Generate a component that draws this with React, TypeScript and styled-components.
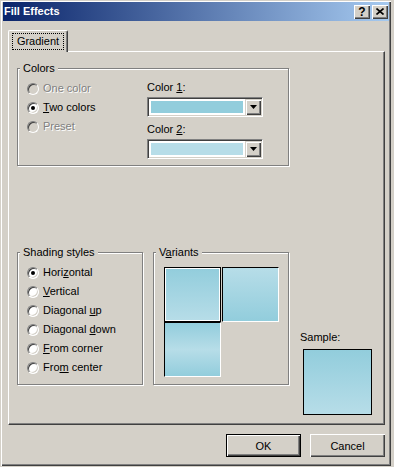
import { FC, ReactNode } from "react";
import styled, { createGlobalStyle } from "styled-components";

const GlobalStyle = createGlobalStyle`
    html, body {
        margin: 0;
        padding: 0;
    }
    body {
        width: 394px;
        height: 467px;
        overflow: hidden;
        background: #d4d0c8;
        font-family: "Liberation Sans", Arial, sans-serif;
        font-size: 11px;
        color: #000;
    }
`;

const Window = styled.div`
    width: 391px;
    height: 466px;
    box-sizing: border-box;
    padding: 2px 2px 2px 3px;
    background: #d4d0c8;
    box-shadow: inset 1px 1px #d4d0c8, inset 2px 2px #fff, inset -1px -1px #404040,
        inset -2px -2px #808080;
    display: flex;
    flex-direction: column;
`;

const TitleBar = styled.div`
    flex: none;
    height: 19px;
    display: flex;
    align-items: center;
    padding: 0 1px 0 1px;
    background: linear-gradient(to right, #0a246a, #a6caf0);
`;

const TitleText = styled.span`
    flex: 1;
    color: #fff;
    font-weight: bold;
    line-height: 13px;
`;

const CaptionButton = styled.button`
    width: 16px;
    height: 14px;
    margin-left: 2px;
    padding: 0;
    border: none;
    background: #d4d0c8;
    box-shadow: inset 1px 1px #fff, inset -1px -1px #404040, inset -2px -2px #808080;
    display: flex;
    align-items: center;
    justify-content: center;
    font: bold 12px "Liberation Sans", Arial, sans-serif;
    line-height: 12px;
    color: #000;
`;

const Body = styled.div`
    flex: 1;
    display: flex;
    flex-direction: column;
    padding: 9px 0 0 5px;
`;

const TabStrip = styled.div`
    display: flex;
    position: relative;
    z-index: 1;
    margin-bottom: -1px;
`;

const Tab = styled.div`
    width: 60px;
    height: 22px;
    box-sizing: border-box;
    border-top: 1px solid #fff;
    border-left: 1px solid #fff;
    border-right: 1px solid #404040;
    border-top-left-radius: 2px;
    border-top-right-radius: 2px;
    box-shadow: inset -1px 0 #808080;
    background: #d4d0c8;
    display: flex;
    justify-content: center;
    padding-top: 2px;
`;

const FocusLabel = styled.span`
    height: 17px;
    box-sizing: border-box;
    padding: 1px 4px;
    border: 1px dotted #000;
    line-height: 13px;
`;

const Panel = styled.div`
    width: 377px;
    height: 374px;
    box-sizing: border-box;
    border-top: 1px solid #fff;
    border-left: 1px solid #fff;
    border-right: 1px solid #404040;
    border-bottom: 1px solid #404040;
    box-shadow: inset -1px -1px #808080;
    padding: 16px 0 0 8px;
    display: flex;
    flex-direction: column;
`;

const Group = styled.div<{ $w: number; $h: number }>`
    position: relative;
    width: ${(p) => p.$w}px;
    height: ${(p) => p.$h}px;
    box-sizing: border-box;
    border: 1px solid #808080;
    box-shadow: inset 1px 1px #fff, 1px 1px #fff;
    display: flex;
`;

const Caption = styled.span`
    position: absolute;
    top: -7px;
    left: 2px;
    padding: 0 3px;
    background: #d4d0c8;
    line-height: 13px;
`;

const RadioList = styled.div<{ $w?: number }>`
    width: ${(p) => (p.$w ? `${p.$w}px` : "auto")};
    box-sizing: border-box;
    padding: 10px 0 0 9px;
    display: flex;
    flex-direction: column;
`;

const RadioRow = styled.div<{ $disabled?: boolean }>`
    height: 19px;
    display: flex;
    align-items: center;
    line-height: 13px;
    color: ${(p) => (p.$disabled ? "#808080" : "#000")};
    text-shadow: ${(p) => (p.$disabled ? "1px 1px #fff" : "none")};
`;

const RadioCircle = styled.span<{ $checked?: boolean; $disabled?: boolean }>`
    flex: none;
    width: 12px;
    height: 12px;
    box-sizing: border-box;
    margin-right: 4px;
    border-radius: 50%;
    border: 1px solid;
    border-color: #808080 #fff #fff #808080;
    background: ${(p) => (p.$disabled ? "#d4d0c8" : "#fff")};
    box-shadow: inset 1px 1px #404040, inset -1px -1px #d4d0c8;
    display: flex;
    align-items: center;
    justify-content: center;

    &::after {
        content: "";
        display: ${(p) => (p.$checked ? "block" : "none")};
        width: 4px;
        height: 4px;
        border-radius: 50%;
        background: #000;
    }
`;

const ColorColumn = styled.div`
    display: flex;
    flex-direction: column;
    padding-top: 12px;
`;

const FieldLabel = styled.span<{ $gap?: number }>`
    line-height: 13px;
    margin-top: ${(p) => p.$gap ?? 0}px;
`;

const ComboBox = styled.div`
    width: 116px;
    height: 20px;
    margin-top: 3px;
    box-sizing: border-box;
    border: 1px solid;
    border-color: #808080 #fff #fff #808080;
    box-shadow: inset 1px 1px #404040, inset -1px -1px #d4d0c8;
    padding: 1px;
    display: flex;
`;

const ComboField = styled.div`
    flex: 1;
    background: #fff;
    padding: 2px;
    display: flex;
`;

const Swatch = styled.div<{ $color: string }>`
    flex: 1;
    background: ${(p) => p.$color};
`;

const ArrowButton = styled.div`
    width: 16px;
    height: 16px;
    background: #d4d0c8;
    box-shadow: inset 1px 1px #d4d0c8, inset 2px 2px #fff, inset -1px -1px #404040,
        inset -2px -2px #808080;
    display: flex;
    align-items: center;
    justify-content: center;
`;

const LowerRow = styled.div`
    display: flex;
    align-items: flex-start;
    margin-top: 86px;
`;

const VariantsGroup = styled(Group)`
    margin-left: 10px;
`;

const TileGrid = styled.div`
    display: grid;
    grid-template-columns: 57px 57px;
    grid-template-rows: 55px 55px;
    column-gap: 1px;
    padding: 14px 0 0 10px;
`;

const Tile = styled.div<{ $fill: string; $selected?: boolean }>`
    box-sizing: border-box;
    background: ${(p) => p.$fill};
    border: 1px solid;
    border-color: ${(p) => (p.$selected ? "#000" : "#000 #fff #fff #000")};
    box-shadow: ${(p) => (p.$selected ? "inset -1px -1px #fff, inset 1px 1px #fff" : "none")};
`;

const SampleColumn = styled.div`
    display: flex;
    flex-direction: column;
    margin-left: 11px;
    padding-top: 79px;
`;

const SampleBox = styled.div`
    width: 69px;
    height: 66px;
    margin: 5px 0 0 3px;
    box-sizing: border-box;
    border: 1px solid #000;
    background: linear-gradient(to bottom, #92cddc, #b7dde8);
`;

const Footer = styled.div`
    width: 377px;
    display: flex;
    justify-content: flex-end;
    gap: 9px;
    margin-top: 9px;
`;

const PushButton = styled.button<{ $default?: boolean }>`
    width: 75px;
    height: 23px;
    box-sizing: border-box;
    padding: 0;
    background: #d4d0c8;
    border: ${(p) => (p.$default ? "1px solid #000" : "none")};
    box-shadow: inset 1px 1px #fff, inset -1px -1px #404040, inset -2px -2px #808080;
    font: 11px "Liberation Sans", Arial, sans-serif;
    color: #000;
`;

const DARK = "#92cddc";
const LIGHT = "#b7dde8";

const Radio: FC<{ checked?: boolean; disabled?: boolean; children: ReactNode }> = ({
    checked,
    disabled,
    children,
}) => (
    <RadioRow $disabled={disabled}>
        <RadioCircle $checked={checked} $disabled={disabled} />
        <span>{children}</span>
    </RadioRow>
);

const ColorPicker: FC<{ color: string }> = ({ color }) => (
    <ComboBox>
        <ComboField>
            <Swatch $color={color} />
        </ComboField>
        <ArrowButton>
            <svg width="7" height="4" viewBox="0 0 7 4">
                <polygon points="0,0 7,0 3.5,4" fill="#000" />
            </svg>
        </ArrowButton>
    </ComboBox>
);

const App: FC = () => {
    return (
        <>
            <GlobalStyle />
            <Window>
                <TitleBar>
                    <TitleText>Fill Effects</TitleText>
                    <CaptionButton>?</CaptionButton>
                    <CaptionButton>
                        <svg width="8" height="7" viewBox="0 0 8 7">
                            <path d="M0.5 0.5 L7.5 6.5 M7.5 0.5 L0.5 6.5" stroke="#000" strokeWidth="1.6" />
                        </svg>
                    </CaptionButton>
                </TitleBar>
                <Body>
                    <TabStrip>
                        <Tab>
                            <FocusLabel>Gradient</FocusLabel>
                        </Tab>
                    </TabStrip>
                    <Panel>
                        <Group $w={272} $h={98}>
                            <Caption>Colors</Caption>
                            <RadioList $w={129}>
                                <Radio disabled>One color</Radio>
                                <Radio checked>
                                    <u>T</u>wo colors
                                </Radio>
                                <Radio disabled>Preset</Radio>
                            </RadioList>
                            <ColorColumn>
                                <FieldLabel>
                                    Color <u>1</u>:
                                </FieldLabel>
                                <ColorPicker color={DARK} />
                                <FieldLabel $gap={6}>
                                    Color <u>2</u>:
                                </FieldLabel>
                                <ColorPicker color={LIGHT} />
                            </ColorColumn>
                        </Group>
                        <LowerRow>
                            <Group $w={126} $h={133}>
                                <Caption>Shading styles</Caption>
                                <RadioList>
                                    <Radio checked>
                                        Hori<u>z</u>ontal
                                    </Radio>
                                    <Radio>
                                        <u>V</u>ertical
                                    </Radio>
                                    <Radio>
                                        Diagonal <u>u</u>p
                                    </Radio>
                                    <Radio>
                                        Diagonal <u>d</u>own
                                    </Radio>
                                    <Radio>
                                        <u>F</u>rom corner
                                    </Radio>
                                    <Radio>
                                        Fro<u>m</u> center
                                    </Radio>
                                </RadioList>
                            </Group>
                            <VariantsGroup $w={136} $h={133}>
                                <Caption>
                                    V<u>a</u>riants
                                </Caption>
                                <TileGrid>
                                    <Tile $selected $fill={`linear-gradient(to bottom, ${DARK}, ${LIGHT})`} />
                                    <Tile $fill={`linear-gradient(to bottom, ${LIGHT}, ${DARK})`} />
                                    <Tile $fill={`linear-gradient(to bottom, ${DARK}, ${LIGHT}, ${DARK})`} />
                                </TileGrid>
                            </VariantsGroup>
                            <SampleColumn>
                                <FieldLabel>Sample:</FieldLabel>
                                <SampleBox />
                            </SampleColumn>
                        </LowerRow>
                    </Panel>
                    <Footer>
                        <PushButton $default>OK</PushButton>
                        <PushButton>Cancel</PushButton>
                    </Footer>
                </Body>
            </Window>
        </>
    );
};

export default App;
